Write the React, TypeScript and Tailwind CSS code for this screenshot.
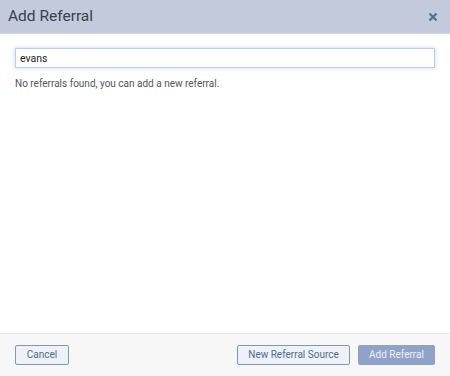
import { useState } from "react";

export default function App() {
  const [query, setQuery] = useState("evans");

  return (
    <div className="w-[450px] h-[376px] flex flex-col bg-white font-['Roboto',sans-serif]">
      {/* Header */}
      <div className="h-[34px] flex items-center justify-between pl-2 pr-[9px] bg-[#c2cadb] border-b border-[#d3d9e4]">
        <span className="text-[15.5px] text-[#39414d]">Add Referral</span>
        <button className="w-4 h-4 flex items-center justify-center">
          <svg viewBox="0 0 10 10" className="w-[8px] h-[8px]">
            <path d="M1.5 1.5 L8.5 8.5 M8.5 1.5 L1.5 8.5" stroke="#4b7090" strokeWidth="2.6" strokeLinecap="square" />
          </svg>
        </button>
      </div>

      {/* Body */}
      <div className="flex-1 px-[15px] pt-[14px]">
        <input
          value={query}
          onChange={(e) => setQuery(e.target.value)}
          autoFocus
          className="block w-[420px] h-[20px] px-[4px] text-[10.5px] text-[#222] border border-[#b9cdf5] shadow-[0_0_4px_rgba(120,160,240,0.45)] outline-none"
        />
        <p className="mt-[8px] text-[10px] leading-[15px] text-[#555]">No referrals found, you can add a new referral.</p>
      </div>

      {/* Footer */}
      <div className="h-[43px] flex items-center justify-between px-[15px] pb-[1px] bg-[#f7f7f7] border-t border-[#e8e8e8]">
        <button className="h-[20px] w-[54px] text-[10px] text-[#4d6d8a] bg-[#eef2f8] border border-[#7d9ab5] rounded-[2px]">
          Cancel
        </button>
        <div className="flex gap-2">
          <button className="h-[20px] w-[113px] text-[10px] text-[#4d6d8a] bg-[#eef2f8] border border-[#7d9ab5] rounded-[2px]">
            New Referral Source
          </button>
          <button className="h-[20px] w-[77px] text-[10px] text-[#eef1f7] bg-[#8fa2c9] border border-[#8fa2c9] rounded-[2px]">
            Add Referral
          </button>
        </div>
      </div>
    </div>
  );
}
